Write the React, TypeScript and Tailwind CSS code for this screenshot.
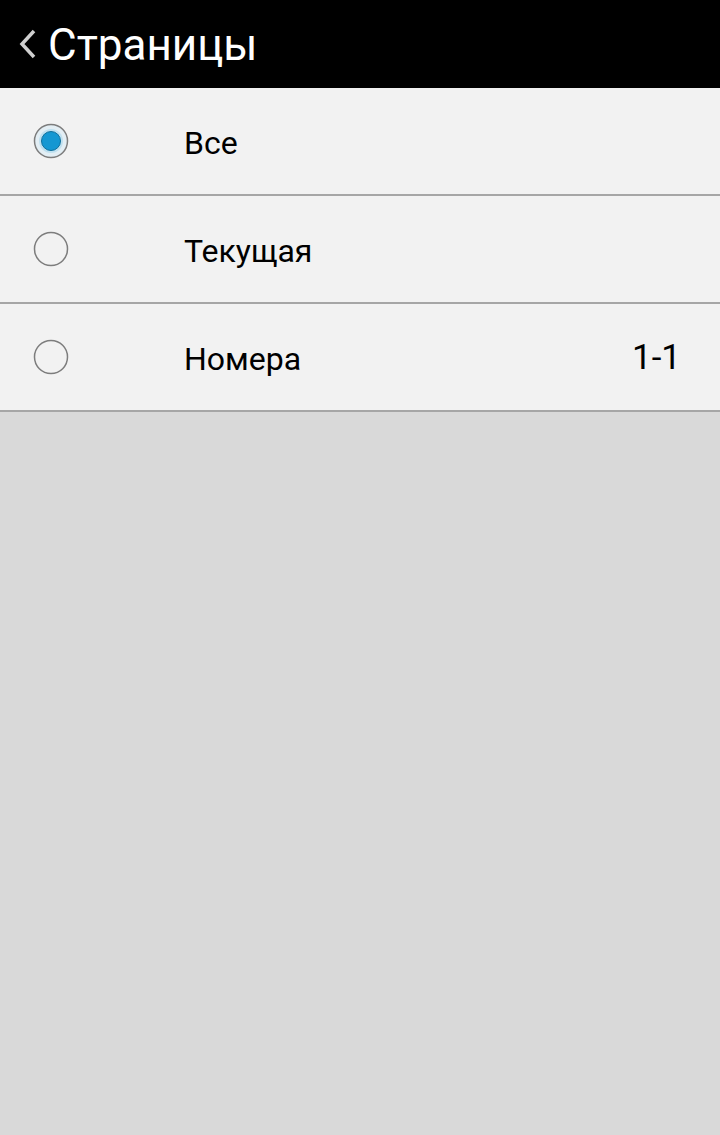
import React, { useState } from "react";

const rows = [
  { id: "all", label: "Все", value: "" },
  { id: "current", label: "Текущая", value: "" },
  { id: "range", label: "Номера", value: "1-1" },
];

const Radio: React.FC<{ checked: boolean }> = ({ checked }) => (
  <svg width="36" height="36" viewBox="0 0 36 36">
    {checked ? (
      <>
        <circle cx="18" cy="18" r="16.5" fill="#e3eef4" stroke="#7d7d7d" strokeWidth="1.5" />
        <circle cx="18" cy="18" r="12" fill="#bfe0ef" />
        <circle cx="18" cy="18" r="9.5" fill="#1497d2" stroke="#0f6f9c" strokeWidth="1" />
      </>
    ) : (
      <circle cx="18" cy="18" r="16.5" fill="none" stroke="#7d7d7d" strokeWidth="1.5" />
    )}
  </svg>
);

const App: React.FC = () => {
  const [selected, setSelected] = useState("all");

  return (
    <div className="min-h-[1135px] bg-[#d9d9d9]" style={{ fontFamily: "Roboto, 'Noto Sans', sans-serif" }}>
      <div className="h-[88px] bg-black flex items-center pl-[18px] text-white">
        <svg width="20" height="30" viewBox="0 0 20 30" className="mr-[10px]">
          <path d="M16 2 L4 15 L16 28" fill="none" stroke="#cfcfcf" strokeWidth="3.5" />
        </svg>
        <span className="text-[44px] leading-none mt-[2px]">Страницы</span>
      </div>
      {rows.map((row) => (
        <div
          key={row.id}
          onClick={() => setSelected(row.id)}
          className="h-[108px] bg-[#f2f2f2] border-b-2 border-[#a6a6a6] flex items-center pl-[33px] pr-[39px]"
        >
          <Radio checked={selected === row.id} />
          <span className="ml-[115px] mt-[3px] text-[32px] text-black flex-1">{row.label}</span>
          {row.value && <span className="mt-[3px] text-[35px] text-black">{row.value}</span>}
        </div>
      ))}
    </div>
  );
};

export default App;
